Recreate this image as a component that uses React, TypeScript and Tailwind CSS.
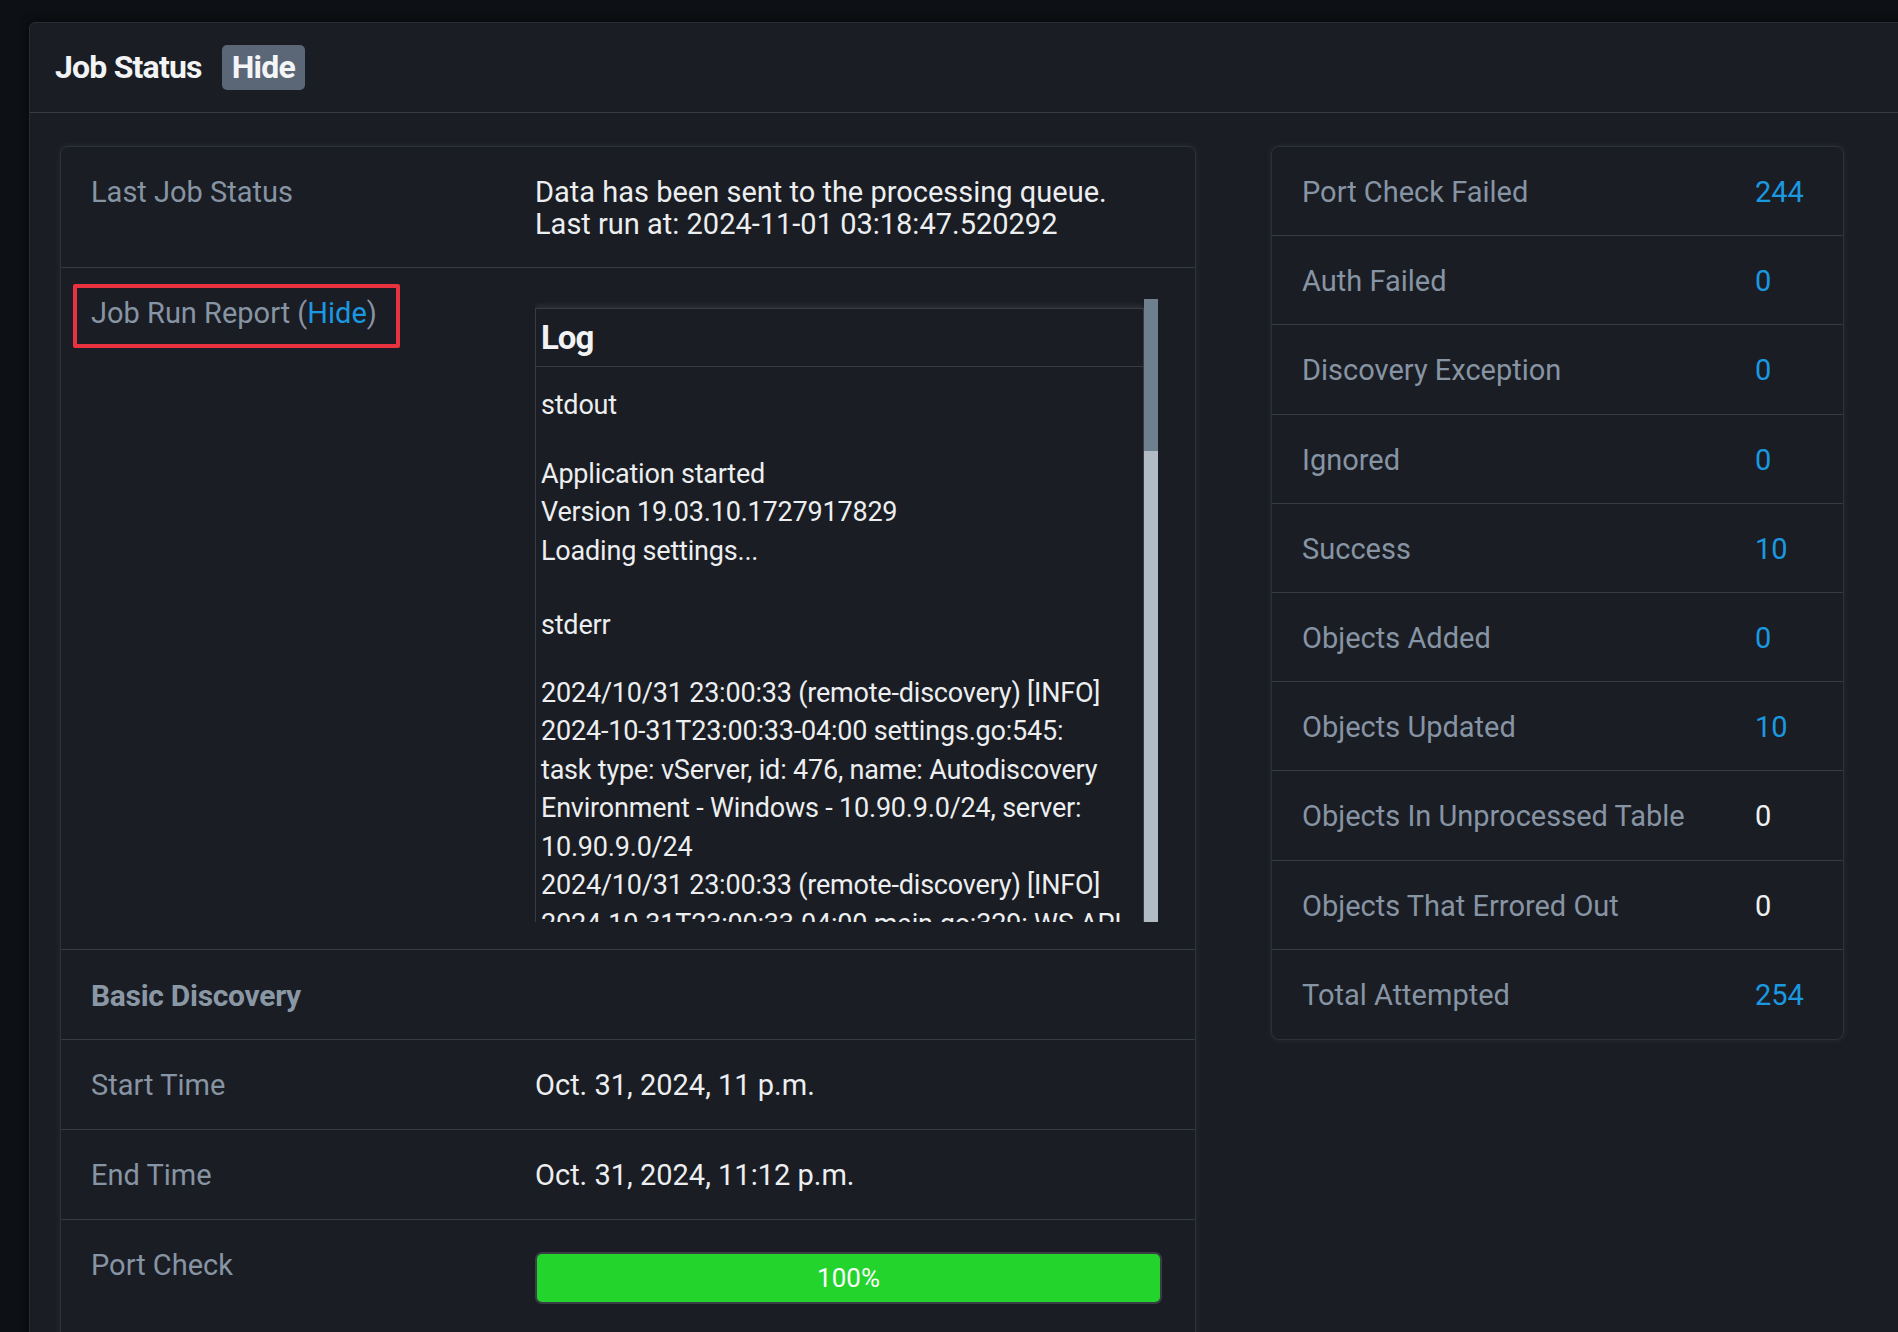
import React from "react";

const stats: [string, string, boolean][] = [
  ["Port Check Failed", "244", true],
  ["Auth Failed", "0", true],
  ["Discovery Exception", "0", true],
  ["Ignored", "0", true],
  ["Success", "10", true],
  ["Objects Added", "0", true],
  ["Objects Updated", "10", true],
  ["Objects In Unprocessed Table", "0", false],
  ["Objects That Errored Out", "0", false],
  ["Total Attempted", "254", true],
];

const errLines = [
  "2024/10/31 23:00:33 (remote-discovery) [INFO]",
  "2024-10-31T23:00:33-04:00 settings.go:545:",
  "task type: vServer, id: 476, name: Autodiscovery",
  "Environment - Windows - 10.90.9.0/24, server:",
  "10.90.9.0/24",
  "2024/10/31 23:00:33 (remote-discovery) [INFO]",
  "2024-10-31T23:00:33-04:00 main.go:329: WS API",
];

function LogBox() {
  return (
    <div className="mt-[2px] flex h-[623px] w-[623px]">
      <div className="h-[623px] w-[609px] overflow-hidden pt-[9px]">
        <div className="w-[609px] border border-[#383c43] bg-[#1a1d23] shadow-[0_-3px_5px_rgba(120,130,140,0.18)]">
          <div className="flex h-[58px] items-center border-b border-[#383c43] px-[5px] text-[33px] font-bold tracking-[-1px] text-[#f1f2f4]">
            Log
          </div>
          <div className="px-[5px] pt-[19px] text-[27px] leading-[38.5px] tracking-[-0.2px] text-[#eceef0] whitespace-nowrap">
            <div>stdout</div>
            <div className="mt-[30px]">
              <div>Application started</div>
              <div>Version 19.03.10.1727917829</div>
              <div>Loading settings...</div>
            </div>
            <div className="mt-[36px]">stderr</div>
            <div className="mt-[29px]">
              {errLines.map((l, i) => (
                <div key={i}>{l}</div>
              ))}
            </div>
          </div>
        </div>
      </div>
      <div className="flex h-[623px] w-[14px] flex-col">
        <div className="h-[152px] bg-[#6e7f8e]" />
        <div className="flex-1 bg-[#b1bbc5]" />
      </div>
    </div>
  );
}

export default function App() {
  const label = "text-[#8794a3]";
  const rowBorder = "border-b border-[#373b42]";
  return (
    <div className="h-[1332px] w-[1898px] overflow-hidden bg-[#0d1014] pl-[29px] pt-[22px] font-[Roboto,sans-serif] text-[29px] leading-[33px]">
      <div className="min-h-[1400px] w-[1900px] rounded-tl-[6px] border border-[#2a2e35] bg-[#1a1d23] shadow-[0_0_10px_rgba(0,0,0,0.6)]">
        {/* header */}
        <div className="flex h-[90px] items-center gap-[20px] border-b border-[#373b42] px-[25px]">
          <div className="text-[32px] font-bold tracking-[-0.8px] text-[#f2f3f5]">Job Status</div>
          <div className="flex h-[45px] items-center rounded-[5px] bg-[#5b6677] px-[10px] text-[32px] font-bold tracking-[-0.8px] text-[#f4f5f7]">
            Hide
          </div>
        </div>

        {/* body */}
        <div className="flex items-start gap-[75px] pl-[30px] pt-[33px]">
          {/* left card */}
          <div className="w-[1136px] rounded-[8px] border border-[#2d3138] bg-[#1a1d23] shadow-[0_0_6px_rgba(110,120,130,0.18)]">
            <div className={`flex ${rowBorder} pb-[27px] pt-[29px]`}>
              <div className={`w-[474px] pl-[30px] ${label}`}>Last Job Status</div>
              <div className="leading-[32px] text-[#eceef0]">
                <div>Data has been sent to the processing queue.</div>
                <div>Last run at: 2024-11-01 03:18:47.520292</div>
              </div>
            </div>
            <div className={`flex ${rowBorder} pb-[27px] pt-[29px]`}>
              <div className={`w-[474px] pl-[30px] ${label}`}>
                <div className="relative inline-block">
                  <span>
                    Job Run Report (<span className="text-[#1a98e0]">Hide</span>)
                  </span>
                  <div className="absolute left-[-18px] top-[-13px] h-[64px] w-[327px] rounded-[2px] border-[4px] border-[#e8323f]" />
                </div>
              </div>
              <LogBox />
            </div>
            <div className={`flex ${rowBorder} pb-[27px] pt-[29px]`}>
              <div className="pl-[30px] text-[30px] font-bold tracking-[-0.3px] text-[#8a98a6]">Basic Discovery</div>
            </div>
            <div className={`flex ${rowBorder} pb-[27px] pt-[29px]`}>
              <div className={`w-[474px] pl-[30px] ${label}`}>Start Time</div>
              <div className="text-[#eceef0]">Oct. 31, 2024, 11 p.m.</div>
            </div>
            <div className={`flex ${rowBorder} pb-[27px] pt-[29px]`}>
              <div className={`w-[474px] pl-[30px] ${label}`}>End Time</div>
              <div className="text-[#eceef0]">Oct. 31, 2024, 11:12 p.m.</div>
            </div>
            <div className="flex pb-[80px] pt-[29px]">
              <div className={`w-[474px] pl-[30px] ${label}`}>Port Check</div>
              <div className="mt-[3px] flex h-[52px] w-[627px] items-center justify-center rounded-[7px] border-2 border-[#3a3f46] bg-[#22d42b] text-[26px] text-white">
                100%
              </div>
            </div>
          </div>

          {/* right card */}
          <div className="w-[573px] rounded-[8px] border border-[#2d3138] bg-[#1a1d23] shadow-[0_0_6px_rgba(110,120,130,0.18)]">
            {stats.map(([name, value, blue], i) => (
              <div
                key={name}
                className={`flex pt-[29px] ${i < stats.length - 1 ? `${rowBorder} pb-[26.2px]` : "pb-[27px]"}`}
              >
                <div className={`w-[483px] pl-[30px] ${label}`}>{name}</div>
                <div className={blue ? "text-[#1a98e0]" : "text-[#eef0f2]"}>{value}</div>
              </div>
            ))}
          </div>
        </div>
      </div>
    </div>
  );
}
